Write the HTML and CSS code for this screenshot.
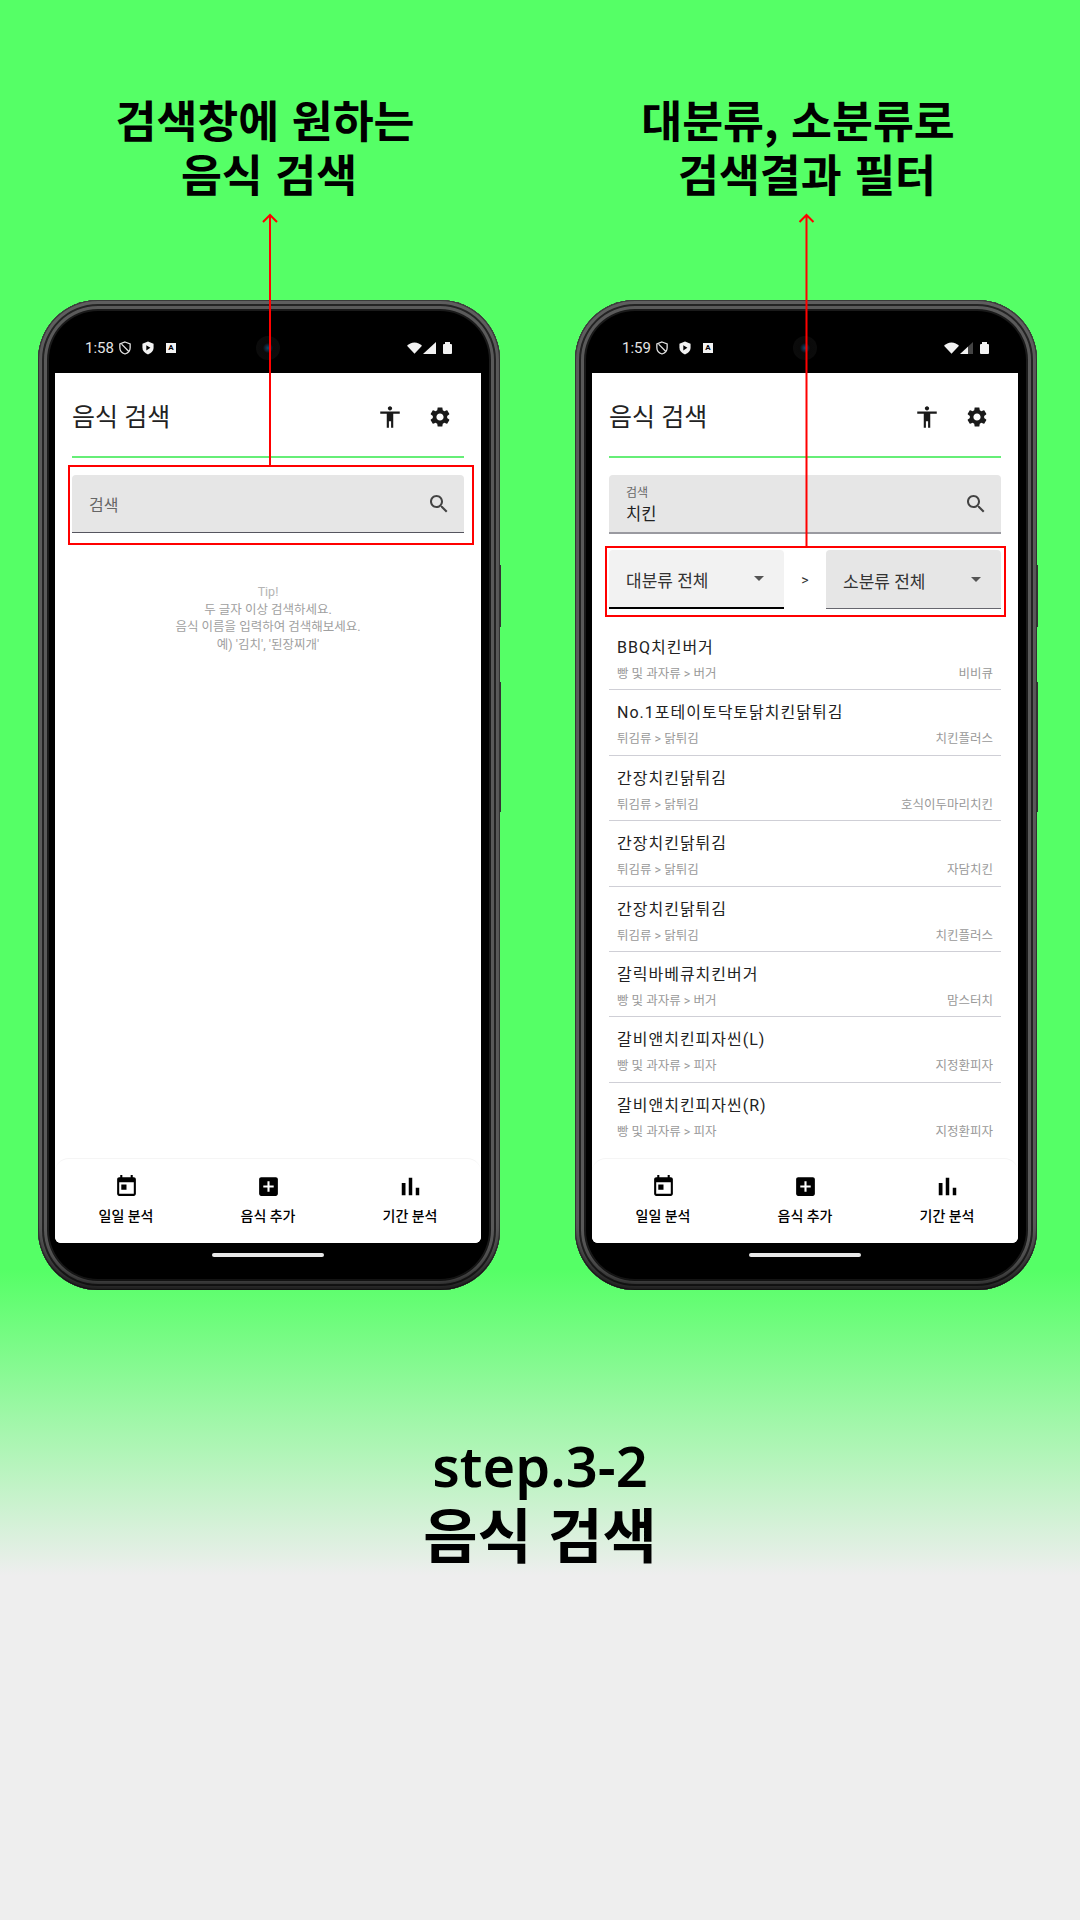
FILE: index.html
```html
<!DOCTYPE html>
<html lang="ko">
<head>
    <meta charset="UTF-8">
    <meta name="viewport" content="width=device-width, initial-scale=1.0">
    <title>음식 검색</title>
    <link rel="stylesheet" href="styles.css">
</head>
<body>
    <svg width="0" height="0" class="defs">
        <defs>
            <symbol id="i-person" viewBox="0 0 24 24"><path d="M12 2c1.1 0 2 .9 2 2s-.9 2-2 2-2-.9-2-2 .9-2 2-2zm9 7h-6v13h-2v-6h-2v6H9V9H3V7h18v2z"/></symbol>
            <symbol id="i-gear" viewBox="0 0 24 24"><path d="M19.14 12.94c.04-.3.06-.61.06-.94 0-.32-.02-.64-.07-.94l2.03-1.58c.18-.14.23-.41.12-.61l-1.92-3.32c-.12-.22-.37-.29-.59-.22l-2.39.96c-.5-.38-1.03-.7-1.62-.94l-.36-2.54c-.04-.24-.24-.41-.48-.41h-3.84c-.24 0-.43.17-.47.41l-.36 2.54c-.59.24-1.13.57-1.62.94l-2.39-.96c-.22-.08-.47 0-.59.22L2.74 8.87c-.12.21-.08.47.12.61l2.03 1.58c-.05.3-.09.63-.09.94s.02.64.07.94l-2.03 1.58c-.18.14-.23.41-.12.61l1.92 3.32c.12.22.37.29.59.22l2.39-.96c.5.38 1.03.7 1.62.94l.36 2.54c.05.24.24.41.48.41h3.84c.24 0 .44-.17.47-.41l.36-2.54c.59-.24 1.13-.56 1.62-.94l2.39.96c.22.08.47 0 .59-.22l1.92-3.32c.12-.22.07-.47-.12-.61l-2.01-1.58zM12 15.6c-1.98 0-3.6-1.62-3.6-3.6s1.62-3.6 3.6-3.6 3.6 1.62 3.6 3.6-1.62 3.6-3.6 3.6z"/></symbol>
            <symbol id="i-search" viewBox="0 0 24 24"><path d="M15.5 14h-.79l-.28-.27C15.41 12.59 16 11.11 16 9.5 16 5.91 13.09 3 9.5 3S3 5.91 3 9.5 5.91 16 9.5 16c1.61 0 3.09-.59 4.23-1.57l.27.28v.79l5 4.99L20.49 19l-4.99-5zm-6 0C7.01 14 5 11.99 5 9.5S7.01 5 9.5 5 14 7.01 14 9.5 11.99 14 9.5 14z"/></symbol>
            <symbol id="i-today" viewBox="0 0 24 24"><path d="M19 3h-1V1h-2v2H8V1H6v2H5c-1.11 0-1.99.9-1.99 2L3 19c0 1.1.89 2 2 2h14c1.1 0 2-.9 2-2V5c0-1.1-.9-2-2-2zm0 16H5V8h14v11zM7 10h5v5H7z"/></symbol>
            <symbol id="i-add" viewBox="0 0 24 24"><path d="M19 3H5c-1.11 0-2 .9-2 2v14c0 1.1.89 2 2 2h14c1.1 0 2-.9 2-2V5c0-1.1-.9-2-2-2zm-2 10h-4v4h-2v-4H7v-2h4V7h2v4h4v2z"/></symbol>
            <symbol id="i-chart" viewBox="2 2 20 20"><path d="M5 9.2h3V19H5zM10.6 5h2.8v14h-2.8zm5.6 8H19v6h-2.8z"/></symbol>
            <symbol id="i-shield-off" viewBox="0 0 14 16"><path d="M7 1l6 2.200v4.600c0 3.400-2.500 6.100-6 7.200-3.500-1.100-6-3.800-6-7.200V3.200z" fill="none" stroke="#e4e4e4" stroke-width="1.500"/><path d="M3 3.500l8.500 8.500" stroke="#e4e4e4" stroke-width="1.500"/></symbol>
            <symbol id="i-shield-play" viewBox="0 0 14 16"><path d="M7 .5l6.500 2.400v4.900c0 3.500-2.700 6.400-6.500 7.700C3.200 14.200.5 11.300.5 7.800V2.900z" fill="#f2f2f2"/><path d="M5 4.800l4.800 3-4.800 3z" fill="#000"/></symbol>
            <symbol id="i-wifi" viewBox="0 0 16 12"><path d="M8 12L0 3.600C2 1.400 4.800 0 8 0s6 1.400 8 3.600z" fill="#f2f2f2"/></symbol>
        </defs>
    </svg>

    <div class="columns">
        <section class="col">
            <h2 class="caption caption-left">검색창에 원하는<br><span class="caption-shift">음식 검색</span></h2>
            <div class="phone">
                <div class="side-key key-top"></div>
                <div class="side-key key-bottom"></div>
                <div class="status">
                    <span class="time">1:58</span>
                    <svg class="st-shield"><use href="#i-shield-off"/></svg>
                    <svg class="st-shield st-gap"><use href="#i-shield-play"/></svg>
                    <span class="st-a">A</span>
                    <span class="camera"></span>
                    <span class="st-right">
                        <svg class="st-wifi"><use href="#i-wifi"/></svg>
                        <span class="st-signal"></span>
                        <span class="st-battery"></span>
                    </span>
                </div>
                <div class="screen">
                    <header class="appbar">
                        <h1>음식 검색</h1>
                        <svg class="bar-icon"><use href="#i-person"/></svg>
                        <svg class="bar-icon bar-gear"><use href="#i-gear"/></svg>
                    </header>
                    <div class="search-wrap">
                        <div class="search">
                            <span class="placeholder">검색</span>
                            <svg class="search-icon"><use href="#i-search"/></svg>
                        </div>
                    </div>
                    <div class="tip">
                        <p class="tip-head">Tip!</p>
                        <p>두 글자 이상 검색하세요.</p>
                        <p>음식 이름을 입력하여 검색해보세요.</p>
                        <p>예) '김치', '된장찌개'</p>
                    </div>
                    <nav class="tabbar">
                        <div class="tabbar-item"><svg><use href="#i-today"/></svg><span>일일 분석</span></div>
                        <div class="tabbar-item"><svg><use href="#i-add"/></svg><span>음식 추가</span></div>
                        <div class="tabbar-item"><svg><use href="#i-chart"/></svg><span>기간 분석</span></div>
                    </nav>
                </div>
                <div class="chin"><span class="home-bar"></span></div>
            </div>
        </section>

        <section class="col">
            <h2 class="caption caption-right">대분류, 소분류로<br><span class="caption-shift">검색결과 필터</span></h2>
            <div class="phone">
                <div class="side-key key-top"></div>
                <div class="side-key key-bottom"></div>
                <div class="status">
                    <span class="time">1:59</span>
                    <svg class="st-shield"><use href="#i-shield-off"/></svg>
                    <svg class="st-shield st-gap"><use href="#i-shield-play"/></svg>
                    <span class="st-a">A</span>
                    <span class="camera"></span>
                    <span class="st-right">
                        <svg class="st-wifi"><use href="#i-wifi"/></svg>
                        <span class="st-signal st-signal-low"></span>
                        <span class="st-battery"></span>
                    </span>
                </div>
                <div class="screen">
                    <header class="appbar">
                        <h1>음식 검색</h1>
                        <svg class="bar-icon"><use href="#i-person"/></svg>
                        <svg class="bar-icon bar-gear"><use href="#i-gear"/></svg>
                    </header>
                    <div class="search-wrap">
                        <div class="search search-filled">
                            <div class="field">
                                <span class="field-label">검색</span>
                                <span class="field-value">치킨</span>
                            </div>
                            <svg class="search-icon"><use href="#i-search"/></svg>
                        </div>
                    </div>
                    <div class="filters">
                        <div class="select select-active"><span>대분류 전체</span><i class="caret"></i></div>
                        <span class="filters-sep">&gt;</span>
                        <div class="select"><span>소분류 전체</span><i class="caret"></i></div>
                    </div>
                    <ul class="results">
                        <li><div class="name">BBQ치킨버거</div><div class="meta"><span>빵 및 과자류 &gt; 버거</span><span>비비큐</span></div></li>
                        <li><div class="name">No.1포테이토닥토닭치킨닭튀김</div><div class="meta"><span>튀김류 &gt; 닭튀김</span><span>치킨플러스</span></div></li>
                        <li><div class="name">간장치킨닭튀김</div><div class="meta"><span>튀김류 &gt; 닭튀김</span><span>호식이두마리치킨</span></div></li>
                        <li><div class="name">간장치킨닭튀김</div><div class="meta"><span>튀김류 &gt; 닭튀김</span><span>자담치킨</span></div></li>
                        <li><div class="name">간장치킨닭튀김</div><div class="meta"><span>튀김류 &gt; 닭튀김</span><span>치킨플러스</span></div></li>
                        <li><div class="name">갈릭바베큐치킨버거</div><div class="meta"><span>빵 및 과자류 &gt; 버거</span><span>맘스터치</span></div></li>
                        <li><div class="name">갈비앤치킨피자씬(L)</div><div class="meta"><span>빵 및 과자류 &gt; 피자</span><span>지정환피자</span></div></li>
                        <li><div class="name">갈비앤치킨피자씬(R)</div><div class="meta"><span>빵 및 과자류 &gt; 피자</span><span>지정환피자</span></div></li>
                    </ul>
                    <nav class="tabbar">
                        <div class="tabbar-item"><svg><use href="#i-today"/></svg><span>일일 분석</span></div>
                        <div class="tabbar-item"><svg><use href="#i-add"/></svg><span>음식 추가</span></div>
                        <div class="tabbar-item"><svg><use href="#i-chart"/></svg><span>기간 분석</span></div>
                    </nav>
                </div>
                <div class="chin"><span class="home-bar"></span></div>
            </div>
        </section>
    </div>

    <div class="step">
        <p class="step-no">step.3-2</p>
        <p class="step-name">음식 검색</p>
    </div>

    <!-- red callouts lie over the phones -->
    <svg class="callouts" viewBox="0 0 1080 1920" width="1080" height="1920">
        <g fill="none" stroke="#f00" stroke-width="2">
            <rect x="69" y="466" width="404" height="78"/>
            <path d="M270 466V215M263 222l7-7 7 7"/>
            <rect x="606" y="547" width="399" height="69"/>
            <path d="M806.500 547V215M799.500 222l7-7 7 7"/>
        </g>
    </svg>
</body>
</html>
```

FILE: styles.css
```css
* { box-sizing: border-box; }
body {
    margin: 0;
    width: 1080px;
    height: 1920px;
    overflow: hidden;
    position: relative;
    font-family: "Noto Sans CJK KR", "Noto Sans", sans-serif;
    color: #000;
    background: linear-gradient(to bottom, #55ff66 0, #55ff66 1270px, #eeeeee 1575px, #eeeeee 100%);
}
h1, h2, p, ul { margin: 0; padding: 0; }
.defs { position: absolute; }
.callouts { position: absolute; left: 0; top: 0; }

.columns {
    display: flex;
    gap: 75px;
    padding-left: 38px;
}
.col { width: 462px; }

.caption {
    height: 300px;
    padding-top: 92px;
    font-size: 44.5px;
    line-height: 54px;
    font-weight: 700;
    text-align: center;
    white-space: nowrap;
}
.caption-left { margin-left: -8px; }
.caption-right { margin-left: -16px; }
.caption-shift { margin-left: 8px; }
.caption-right .caption-shift { margin-left: 18px; }

/* phone body */
.phone {
    position: relative;
    height: 990px;
    padding: 17px 19px 17px 17px;
    display: flex;
    flex-direction: column;
    background: #000;
    border-radius: 60px;
    box-shadow:
        inset 0 -14px 12px -6px rgba(0, 0, 0, .75),
        inset 0 0 0 1px #3a3a3a,
        inset 0 0 0 4px #5e5e5e,
        inset 0 0 0 6px #242424,
        inset 0 0 0 9px #5a5a5a,
        inset 0 0 0 11px #1a1a1a;
}
.side-key {
    position: absolute;
    right: -1px;
    width: 2px;
    background: #333;
}
.key-top { top: 265px; height: 62px; }
.key-bottom { top: 382px; height: 130px; }

.status {
    height: 56px;
    flex: none;
    position: relative;
    display: flex;
    align-items: center;
    padding: 6px 29px 0 30px;
    color: #e4e4e4;
}
.time { font-family: Roboto, sans-serif; font-size: 15px; margin-right: 5px; }
.st-shield { width: 12px; height: 14px; }
.st-gap { margin-left: 11px; }
.st-a {
    margin-left: 12px;
    width: 10px;
    height: 10px;
    background: #f2f2f2;
    color: #000;
    font: 700 8px/10px Roboto, sans-serif;
    text-align: center;
}
.camera {
    position: absolute;
    left: 201px;
    top: 19px;
    width: 24px;
    height: 24px;
    border-radius: 50%;
    background: radial-gradient(circle, #16486a 0, #0d2233 18%, #0a0a0a 30%, #0c0c0c 100%);
}
.st-right {
    margin-left: auto;
    display: flex;
    align-items: flex-end;
}
.st-wifi { width: 15px; height: 12px; }
.st-signal {
    width: 13px;
    height: 12px;
    margin-left: 1px;
    background: #f2f2f2;
    clip-path: polygon(100% 0, 100% 100%, 0 100%);
}
.st-signal-low { background: linear-gradient(to right, #f2f2f2 60%, #444 60%); }
.st-battery {
    position: relative;
    width: 9px;
    height: 10px;
    margin-left: 7px;
    background: #f2f2f2;
    border-radius: 1px;
}
.st-battery::before {
    content: "";
    position: absolute;
    left: 2px;
    top: -2px;
    width: 5px;
    height: 2px;
    background: #f2f2f2;
}

/* app screen */
.screen {
    position: relative;
    flex: 1;
    min-height: 0;
    background: #fff;
    border-radius: 0 0 6px 6px;
    display: flex;
    flex-direction: column;
    overflow: hidden;
    font-family: Roboto, "Noto Sans CJK KR", sans-serif;
}
.appbar {
    flex: none;
    height: 85px;
    margin: 0 17px;
    display: flex;
    align-items: center;
    gap: 25px;
    border-bottom: 2px solid #66ee77;
    padding: 0 12px 0 0;
}
.appbar h1 {
    flex: 1;
    margin-top: 1px;
    font-size: 25px;
    font-weight: 400;
    color: #222;
}
.bar-icon { width: 26px; height: 26px; margin-top: 5px; fill: #1a1a1a; }
.bar-gear { width: 24px; height: 24px; }

.search-wrap { flex: none; padding: 17px 17px 0; }
.search {
    height: 58px;
    padding: 0 17px;
    display: flex;
    align-items: center;
    justify-content: space-between;
    background: #e6e6e6;
    border-bottom: 1px solid #55555f;
    border-radius: 4px 4px 0 0;
}
.search-filled { height: 59px; border-bottom: 2px solid #9a9aa0; }
.placeholder { font-size: 16px; color: #666; }
.search-icon { width: 24px; height: 24px; fill: #444; margin-right: -4px; }
.field { display: flex; flex-direction: column; margin-top: 5px; }
.field-label { font-size: 12px; line-height: 16px; color: #666; }
.field-value { font-size: 16.5px; line-height: 24px; margin-top: 2px; color: #222; }

.tip {
    flex: none;
    padding-top: 50px;
    text-align: center;
    font-size: 12.5px;
    line-height: 17.6px;
    color: #a0a0a0;
}
.tip-head { color: #b4b4b4; }

.filters {
    flex: none;
    display: flex;
    align-items: center;
    padding: 16px 17px 0;
}
.select {
    width: 175px;
    height: 59px;
    padding: 0 20px 0 17px;
    display: flex;
    align-items: center;
    justify-content: space-between;
    background: #e6e6e6;
    border-bottom: 1px solid #66666e;
    border-radius: 4px 4px 0 0;
    font-size: 17px;
    color: #333;
}
.select span { margin-top: 2px; }
.select-active { background: #f2f2f2; border-bottom: 2px solid #000; }
.filters-sep { flex: 1; text-align: center; font-size: 14px; color: #333; }
.caret {
    border-left: 5px solid transparent;
    border-right: 5px solid transparent;
    border-top: 5px solid #555;
}

.results {
    flex: 1;
    min-height: 0;
    overflow: hidden;
    list-style: none;
    padding: 16px 17px 0;
}
.results li {
    height: 65.4px;
    padding: 0 8px;
    border-bottom: 1.5px solid #cfcfd6;
}
.results li:last-child { border-bottom: 0; }
.name {
    padding-top: 11px;
    font-size: 16px;
    line-height: 24px;
    letter-spacing: 1px;
    color: #222;
    white-space: nowrap;
}
.meta {
    margin-top: 5px;
    display: flex;
    justify-content: space-between;
    font-size: 12.5px;
    line-height: 18px;
    color: #999;
}

.tabbar {
    position: absolute;
    left: 0;
    right: 0;
    bottom: 0;
    height: 85px;
    display: grid;
    grid-template-columns: repeat(3, 1fr);
    background: #fff;
    border-top: 1px solid #f5f5f5;
    border-radius: 14px 14px 0 0;
}
.tabbar-item {
    display: flex;
    flex-direction: column;
    align-items: center;
    padding-top: 15px;
    font-size: 14px;
    line-height: 20px;
    font-weight: 500;
}
.tabbar-item svg { width: 25px; height: 25px; margin-bottom: 7px; }

.chin {
    flex: none;
    height: 30px;
    display: flex;
    justify-content: center;
    padding-top: 10px;
}
.home-bar {
    width: 112px;
    height: 4px;
    border-radius: 2px;
    background: #e8e8e8;
}

.step {
    margin-top: 142px;
    text-align: center;
    font-weight: 700;
    line-height: 66px;
}
.step-no { font-size: 56px; font-family: "Noto Sans", sans-serif; font-weight: 600; }
.step-name { font-size: 59px; margin-top: 2px; }
```
